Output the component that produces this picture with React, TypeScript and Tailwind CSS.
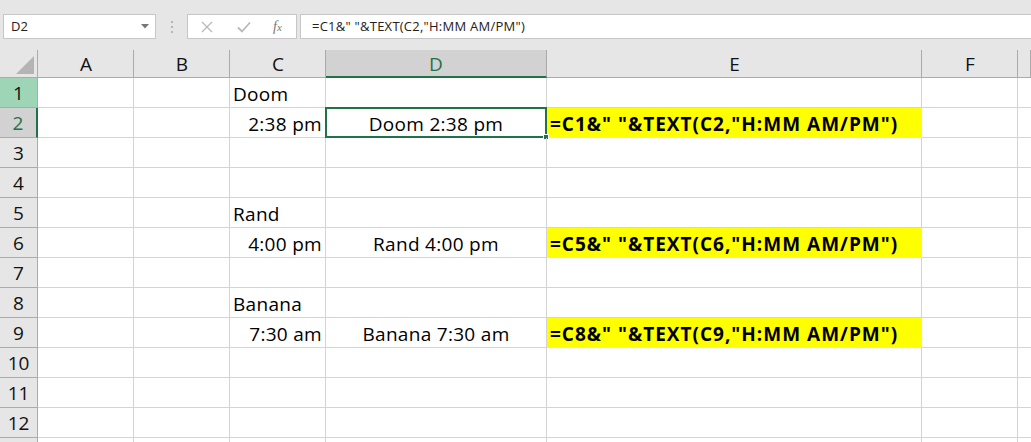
import React from "react";

const cols = ["A", "B", "C", "D", "E", "F", ""];

type Row = { c?: string; cAlign?: "left" | "right"; d?: string; e?: string };

const rows: Row[] = [
  { c: "Doom", cAlign: "left" },
  { c: "2:38 pm", cAlign: "right", d: "Doom 2:38 pm", e: '=C1&" "&TEXT(C2,"H:MM AM/PM")' },
  {},
  {},
  { c: "Rand", cAlign: "left" },
  { c: "4:00 pm", cAlign: "right", d: "Rand 4:00 pm", e: '=C5&" "&TEXT(C6,"H:MM AM/PM")' },
  {},
  { c: "Banana", cAlign: "left" },
  { c: "7:30 am", cAlign: "right", d: "Banana 7:30 am", e: '=C8&" "&TEXT(C9,"H:MM AM/PM")' },
  {},
  {},
  {},
  {},
];

const font = { fontFamily: '"Open Sans", "Noto Sans", sans-serif' };

function FormulaBar() {
  return (
    <div className="h-[50px] bg-[#e6e6e6] flex items-start pt-[14px] pl-[3px]">
      <div className="w-[153px] h-[25px] bg-white border border-[#c6c6c6] flex items-center pl-[7px] pr-[6px] justify-between">
        <span className="text-[13px] text-[#222]">D2</span>
        <svg width="8" height="5" viewBox="0 0 8 5">
          <path d="M0 0 L8 0 L4 4.5 Z" fill="#777" />
        </svg>
      </div>
      <div className="w-[31px] h-[25px] flex flex-col items-center justify-center gap-[3px]">
        <span className="w-[2px] h-[2px] bg-[#b5b5b5]" />
        <span className="w-[2px] h-[2px] bg-[#b5b5b5]" />
        <span className="w-[2px] h-[2px] bg-[#b5b5b5]" />
      </div>
      <div className="w-[110px] h-[25px] bg-white border border-[#c6c6c6] flex items-center">
        <svg width="12" height="12" viewBox="0 0 12 12" className="ml-[13px]">
          <path d="M1 1 L11 11 M11 1 L1 11" stroke="#b9b9b9" strokeWidth="1.3" />
        </svg>
        <svg width="14" height="12" viewBox="0 0 14 12" className="ml-[24px]">
          <path d="M1 6.5 L5 10.5 L13 1.5" stroke="#b9b9b9" strokeWidth="1.8" fill="none" />
        </svg>
        <span
          className="ml-[22px] text-[14px] italic text-[#777] leading-none"
          style={{ fontFamily: '"Liberation Serif", serif' }}
        >
          f<span className="text-[11px]">x</span>
        </span>
      </div>
      <div className="flex-1 h-[25px] bg-white border border-[#c6c6c6] border-r-0 ml-[3px] flex items-center pl-[11px]">
        <span className="text-[13px] tracking-[0.25px] text-[#222]">=C1&amp;" "&amp;TEXT(C2,"H:MM AM/PM")</span>
      </div>
    </div>
  );
}

export default function App() {
  return (
    <div className="w-[1031px] h-[442px] overflow-hidden bg-white" style={font}>
      <FormulaBar />
      <div className="grid grid-cols-[38px_96px_96px_96px_221px_375px_96px_1fr] auto-rows-[30px] grid-rows-[28px]">
        {/* header row */}
        <div className="bg-[#e6e6e6] border-r border-b border-[#ababab] relative">
          <svg width="18" height="18" viewBox="0 0 18 18" className="absolute right-[3px] bottom-[3px]">
            <path d="M18 0 L18 18 L0 18 Z" fill="#b4b4b4" />
          </svg>
        </div>
        {cols.map((c, i) =>
          c === "D" ? (
            <div
              key={i}
              className="bg-[#d2d2d2] border-b-2 border-[#217346] border-r border-r-[#ababab] flex items-center justify-center pt-[2px] text-[19px] text-[#217346]"
            >
              {c}
            </div>
          ) : (
            <div
              key={i}
              className="bg-[#e6e6e6] border-b border-[#ababab] flex items-center justify-center pt-[2px] text-[19px] text-[#111] relative"
            >
              {c}
              <span className="absolute right-0 top-0 bottom-0 w-px bg-[#ababab]" />
            </div>
          )
        )}

        {rows.map((r, ri) => {
          const n = ri + 1;
          const sel = n === 2;
          const hover = n === 1;
          return (
            <React.Fragment key={ri}>
              <div
                className={`flex items-center justify-center pt-[2px] text-[19px] border-b ${
                  sel
                    ? "bg-[#d2d2d2] text-[#217346] border-b-[#ababab] border-r-2 border-r-[#217346]"
                    : hover
                    ? "bg-[#9fd5b7] text-[#111] border-b-[#ababab] border-r border-r-[#ababab]"
                    : "bg-[#e6e6e6] text-[#111] border-b-[#ababab] border-r border-r-[#ababab]"
                }`}
              >
                {n <= 12 ? n : ""}
              </div>
              {/* A, B */}
              <div className="border-r border-b border-[#d4d4d4]" />
              <div className="border-r border-b border-[#d4d4d4]" />
              {/* C */}
              <div
                className={`border-r border-b border-[#d4d4d4] flex items-end pb-[1px] text-[19px] tracking-[0.3px] leading-[24px] text-black whitespace-nowrap ${
                  r.cAlign === "right" ? "justify-end pr-[3px]" : "pl-[3px]"
                }`}
              >
                {r.c}
              </div>
              {/* D */}
              <div className="relative border-r border-b border-[#d4d4d4] flex items-end justify-center pb-[1px] text-[19px] tracking-[0.3px] leading-[24px] text-black whitespace-nowrap">
                {r.d}
                {sel && (
                  <div className="absolute left-[-1px] top-[-1px] right-[-1px] bottom-[-1px] border-2 border-[#217346]">
                    <span className="absolute right-[-4px] bottom-[-4px] w-[6px] h-[6px] bg-[#217346] border border-white" />
                  </div>
                )}
              </div>
              {/* E */}
              <div
                className={`border-r border-b flex items-end pb-[1px] pl-[3px] text-[19px] tracking-[1px] leading-[24px] font-bold text-black whitespace-nowrap ${
                  r.e ? "bg-[#ffff00] border-[#ffff00]" : "border-[#d4d4d4]"
                }`}
              >
                {r.e}
              </div>
              {/* F, G */}
              <div className="border-r border-b border-[#d4d4d4]" />
              <div className="border-b border-[#d4d4d4]" />
            </React.Fragment>
          );
        })}
      </div>
    </div>
  );
}
